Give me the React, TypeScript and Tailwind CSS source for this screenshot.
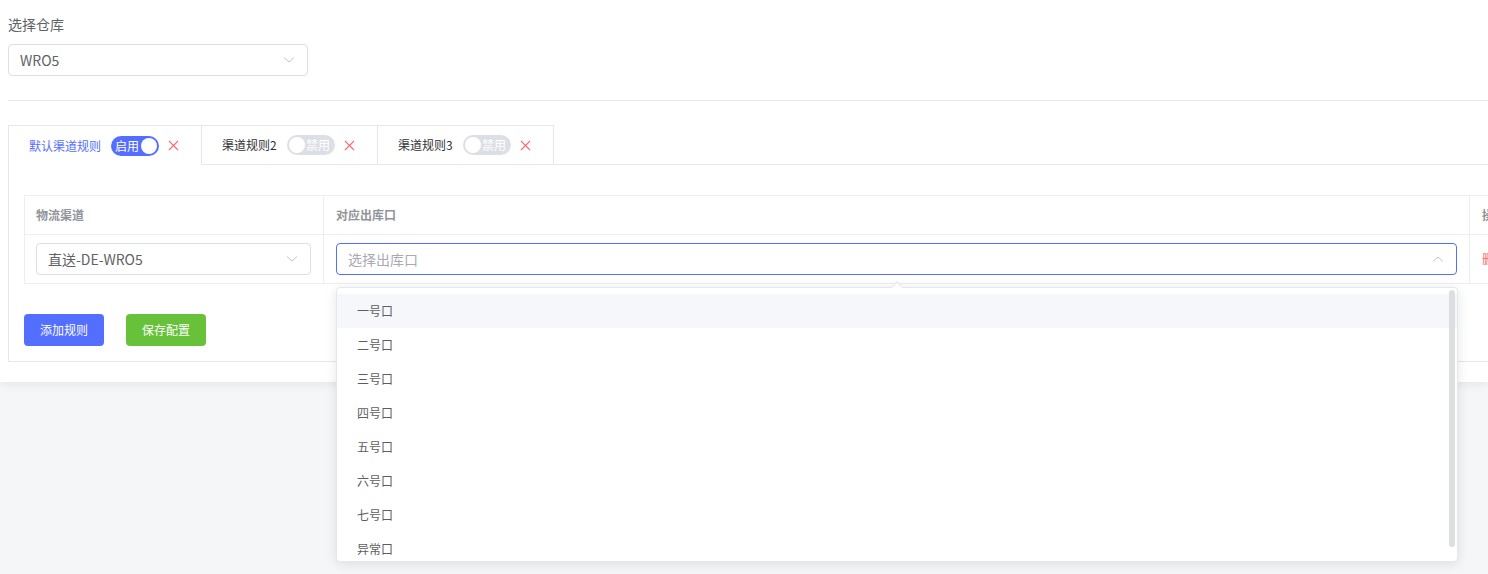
import React from "react";

const FONT = { fontFamily: '"Noto Sans CJK SC", "Noto Sans", sans-serif' };

function ChevronDown() {
  return (
    <svg width="12" height="8" viewBox="0 0 12 8" fill="none">
      <path d="M1 1.5 L6 6 L11 1.5" stroke="#c0c4cc" strokeWidth="1" />
    </svg>
  );
}

function ChevronUp() {
  return (
    <svg width="12" height="8" viewBox="0 0 12 8" fill="none">
      <path d="M1 6.5 L6 2 L11 6.5" stroke="#c0c4cc" strokeWidth="1" />
    </svg>
  );
}

function XIcon() {
  return (
    <svg width="11" height="11" viewBox="0 0 11 11" fill="none" className="block shrink-0">
      <path d="M1 1 L10 10 M10 1 L1 10" stroke="#f56c6c" strokeWidth="1.1" />
    </svg>
  );
}

function Switch({ on }: { on: boolean }) {
  if (on) {
    return (
      <div className="relative flex h-5 w-12 items-center rounded-full bg-[#546eff]">
        <span className="ml-[4px] text-[12px] leading-none text-white">启用</span>
        <span className="absolute right-[2px] top-[2px] h-4 w-4 rounded-full bg-white" />
      </div>
    );
  }
  return (
    <div className="relative flex h-5 w-12 items-center justify-end rounded-full bg-[#dcdfe6]">
      <span className="mr-[5px] text-[12px] leading-none text-white">禁用</span>
      <span className="absolute left-[2px] top-[2px] h-4 w-4 rounded-full bg-white" />
    </div>
  );
}

const items = ["一号口", "二号口", "三号口", "四号口", "五号口", "六号口", "七号口", "异常口"];

export default function App() {
  return (
    <div className="min-h-[574px] w-[1488px] overflow-hidden bg-[#f5f6f8]" style={FONT}>
      <div className="bg-white pb-5 pl-2 pt-[14px] shadow-[0_2px_10px_rgba(0,0,0,0.07)]">
        <div className="text-[14px] leading-5 text-[#606266]">选择仓库</div>
        <div className="mt-2.5 flex h-8 w-[300px] items-center justify-between rounded border border-[#dcdfe6] pl-[11px] pr-[12px]">
          <span className="text-[14px] text-[#606266]">WRO5</span>
          <ChevronDown />
        </div>
        <div className="mt-6 h-px w-full bg-[#e4e7ed]" />

        {/* tabs */}
        <div className="mt-6 flex h-10">
          <div className="flex w-[194px] items-center border-l border-r border-t border-[#e4e7ed] pl-5">
            <span className="w-[72px] shrink-0 whitespace-nowrap text-[12px] text-[#546eff]">默认渠道规则</span>
            <div className="ml-2.5">
              <Switch on />
            </div>
            <div className="ml-[9px]">
              <XIcon />
            </div>
          </div>
          <div className="flex w-[176px] items-center border-b border-r border-t border-[#e4e7ed] pl-5">
            <span className="w-[55px] shrink-0 whitespace-nowrap text-[12px] text-[#303133]">渠道规则2</span>
            <div className="ml-2.5">
              <Switch on={false} />
            </div>
            <div className="ml-[9px]">
              <XIcon />
            </div>
          </div>
          <div className="flex w-[176px] items-center border-b border-r border-t border-[#e4e7ed] pl-5">
            <span className="w-[55px] shrink-0 whitespace-nowrap text-[12px] text-[#303133]">渠道规则3</span>
            <div className="ml-2.5">
              <Switch on={false} />
            </div>
            <div className="ml-[9px]">
              <XIcon />
            </div>
          </div>
          <div className="flex-1 border-b border-[#e4e7ed]" />
        </div>

        {/* panel */}
        <div className="w-[1600px] border-b border-l border-[#e4e7ed] pb-[15px] pl-[15px] pt-[30px]">
          <div className="flex w-max border-l border-t border-[#ebeef5]">
            <div className="flex w-[299px] flex-col">
              <div className="flex h-[39px] items-center border-b border-r border-[#ebeef5] pl-[11px] text-[12px] font-bold text-[#909399]">
                物流渠道
              </div>
              <div className="flex h-[49px] items-center border-b border-r border-[#ebeef5] pl-[11px] pr-3">
                <div className="flex h-8 w-full items-center justify-between rounded border border-[#dcdfe6] pl-[11px] pr-[12px]">
                  <span className="text-[14px] text-[#606266]">直送-DE-WRO5</span>
                  <ChevronDown />
                </div>
              </div>
            </div>
            <div className="flex w-[1146px] flex-col">
              <div className="flex h-[39px] items-center border-b border-r border-[#ebeef5] pl-3 text-[12px] font-bold text-[#909399]">
                对应出库口
              </div>
              <div className="flex h-[49px] items-center border-b border-r border-[#ebeef5] px-3">
                <div className="relative h-8 w-full">
                  <div className="flex h-8 w-full items-center justify-between rounded border border-[#546eff] pl-[11px] pr-[12px]">
                    <span className="text-[14px] text-[#a8abb2]">选择出库口</span>
                    <ChevronUp />
                  </div>
                  {/* dropdown */}
                  <div className="absolute left-0 right-[-1px] top-[44px] z-10 h-[275px] rounded border border-[#e4e7ed] bg-white shadow-[0_2px_12px_rgba(0,0,0,0.1)]">
                    <div className="absolute left-1/2 top-[-5px] h-2 w-2 -translate-x-1/2 rotate-45 border-l border-t border-[#e4e7ed] bg-white" />
                    <div className="relative h-full overflow-hidden rounded pt-[6px]">
                      {items.map((it, i) => (
                        <div
                          key={it}
                          className={
                            "flex h-[34px] items-center pl-5 text-[12px] text-[#5c5e63] " +
                            (i === 0 ? "bg-[#f5f7fa]" : "")
                          }
                        >
                          {it}
                        </div>
                      ))}
                      <div className="absolute right-[2px] top-[2px] h-[257px] w-[6px] rounded-full bg-[#dddee1]" />
                    </div>
                  </div>
                </div>
              </div>
            </div>
            <div className="flex w-[100px] flex-col">
              <div className="flex h-[39px] items-center border-b border-r border-[#ebeef5] pl-3 text-[12px] font-bold text-[#909399]">
                操作
              </div>
              <div className="flex h-[49px] items-center border-b border-r border-[#ebeef5] pl-3 text-[12px] text-[#f56c6c]">
                删除
              </div>
            </div>
          </div>

          <div className="mt-[30px] flex">
            <button className="h-8 w-20 rounded bg-[#546eff] text-[12px] text-white">添加规则</button>
            <button className="ml-[22px] h-8 w-20 rounded bg-[#67c23a] text-[12px] text-white">保存配置</button>
          </div>
        </div>
      </div>
    </div>
  );
}
